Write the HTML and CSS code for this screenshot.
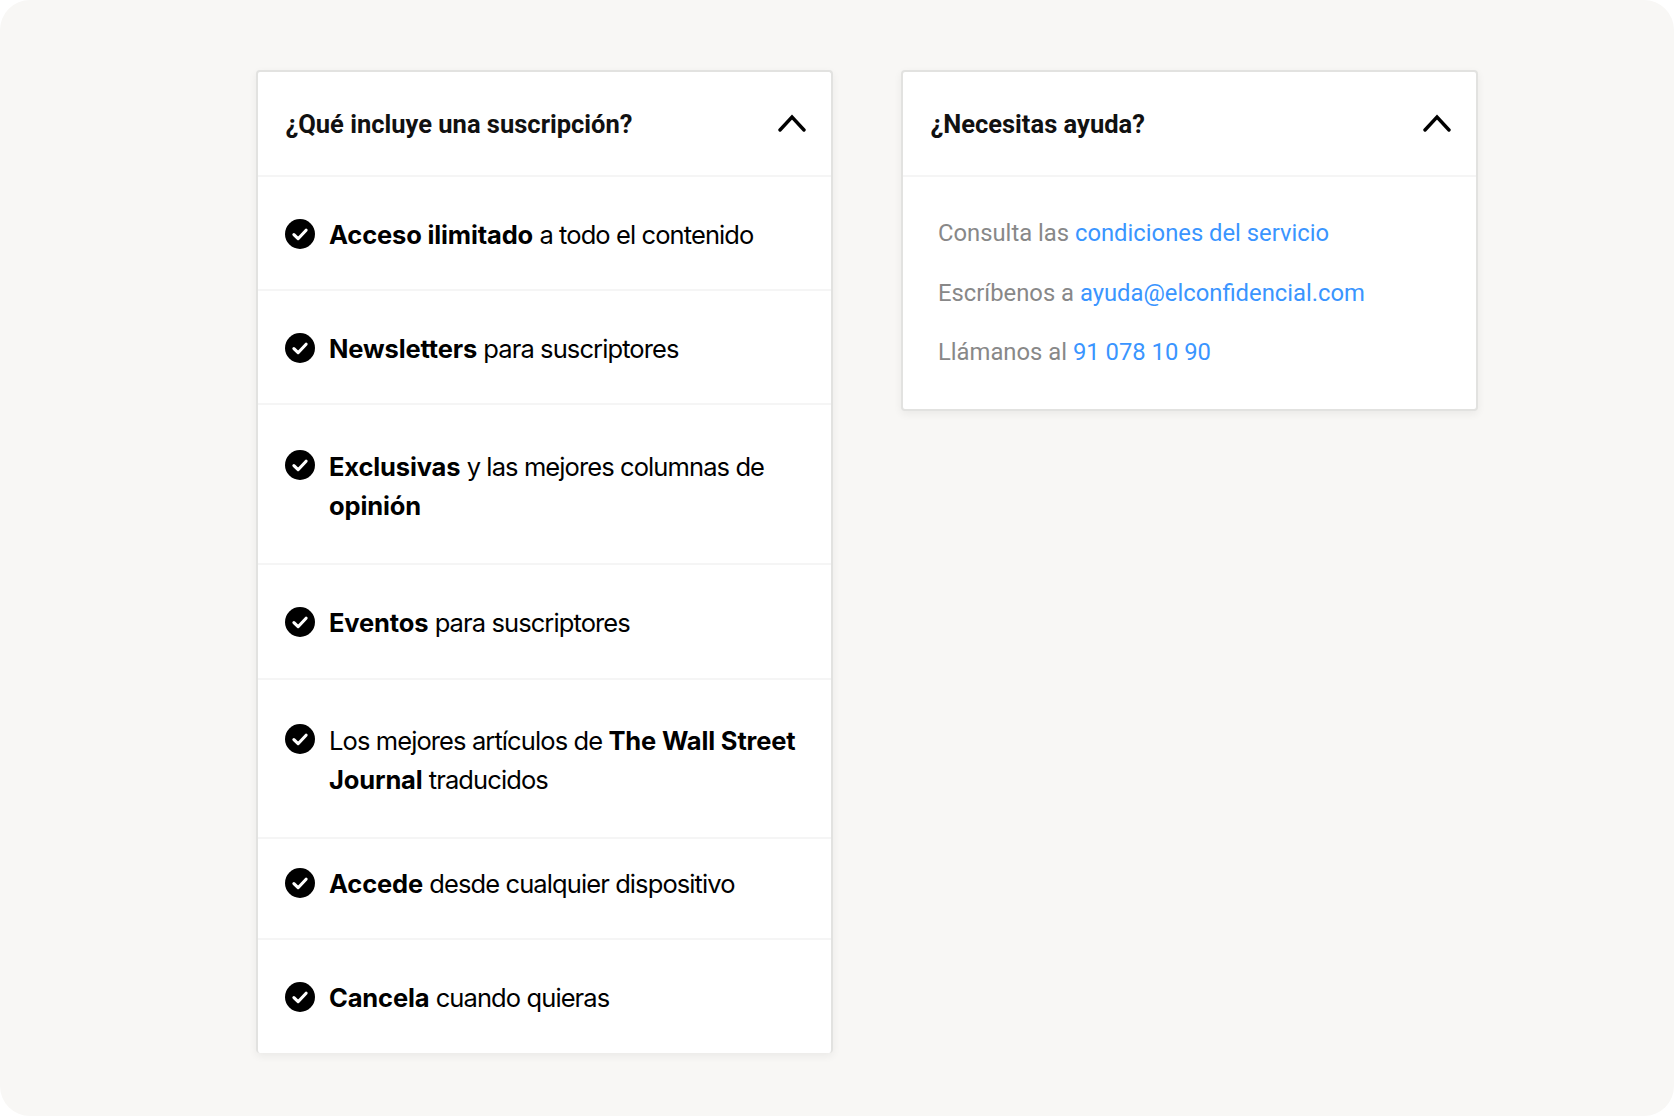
FILE: index.html
```html
<!DOCTYPE html>
<html lang="es">
<head>
<meta charset="utf-8">
<title>Suscripción</title>
<link rel="stylesheet" href="styles.css">
</head>
<body>
<svg class="sprite" width="0" height="0" aria-hidden="true">
  <symbol id="check" viewBox="0 0 30 30">
    <circle cx="15" cy="15" r="15" fill="#000"/>
    <path d="M8.9 15.6l4.2 4.1 8-8.5" fill="none" stroke="#fff" stroke-width="3.1" stroke-linecap="round" stroke-linejoin="round"/>
  </symbol>
  <symbol id="chev" viewBox="0 0 28 18">
    <path d="M2 16L14 3l12 13" fill="none" stroke="#000" stroke-width="3.4" stroke-linecap="round" stroke-linejoin="miter"/>
  </symbol>
</svg>
<main class="page">
  <section class="card card-open">
    <header class="card-head">
      <h2>¿Qué incluye una suscripción?</h2>
      <svg class="chev"><use href="#chev"/></svg>
    </header>
    <ul class="list">
      <li class="item"><svg class="tick"><use href="#check"/></svg><p><b>Acceso ilimitado</b> a todo el contenido</p></li>
      <li class="item"><svg class="tick"><use href="#check"/></svg><p><b>Newsletters</b> para suscriptores</p></li>
      <li class="item item-exclusive"><svg class="tick"><use href="#check"/></svg><p><b>Exclusivas</b> y las mejores columnas de <b>opinión</b></p></li>
      <li class="item item-events"><svg class="tick"><use href="#check"/></svg><p><b>Eventos</b> para suscriptores</p></li>
      <li class="item item-wsj"><svg class="tick"><use href="#check"/></svg><p>Los mejores artículos de <b>The Wall Street Journal</b> traducidos</p></li>
      <li class="item item-short"><svg class="tick"><use href="#check"/></svg><p><b>Accede</b> desde cualquier dispositivo</p></li>
      <li class="item"><svg class="tick"><use href="#check"/></svg><p><b>Cancela</b> cuando quieras</p></li>
    </ul>
  </section>
  <section class="card">
    <header class="card-head">
      <h2>¿Necesitas ayuda?</h2>
      <svg class="chev"><use href="#chev"/></svg>
    </header>
    <div class="help">
      <p>Consulta las <a href="#">condiciones del servicio</a></p>
      <p>Escríbenos a <a href="#">ayuda@elconfidencial.com</a></p>
      <p>Llámanos al <a href="#">91 078 10 90</a></p>
    </div>
  </section>
</main>
</body>
</html>
```
FILE: styles.css
```css
* { box-sizing: border-box; }
html, body { margin: 0; background: #fff; }
.sprite { position: absolute; }
.page {
  width: 1674px;
  height: 1116px;
  background: #f8f7f5;
  border-radius: 30px;
  display: flex;
  align-items: flex-start;
  gap: 68px;
  padding: 70px 0 0 256px;
  overflow: hidden;
}
.card {
  width: 577px;
  background: #fff;
  border: 2px solid #e2e2e0;
  border-radius: 4px;
  box-shadow: 0 3px 8px rgba(0, 0, 0, 0.06);
}
.card-open { border-bottom: 0; }
.card-head {
  height: 105px;
  padding: 0 25px 0 27.5px;
  border-bottom: 2px solid #f5f5f5;
  display: flex;
  align-items: center;
  justify-content: space-between;
}
.card-head h2 {
  margin: 0;
  font: 700 25.5px/32px Roboto, sans-serif;
  color: #111;
}
.chev { width: 28px; height: 18px; flex: none; margin-bottom: 2px; }
.list { list-style: none; margin: 0; padding: 0; }
.item {
  display: flex;
  align-items: flex-start;
  gap: 14px;
  padding: 38px 27px 35px;
  border-bottom: 2px solid #f5f5f5;
  font: 400 25.5px/39px Inter, sans-serif;
  letter-spacing: -0.9px;
  color: #000;
}
.item:last-child { border-bottom: 0; padding-bottom: 36px; }
.item p { margin: 0; }
.item b { font-weight: 700; letter-spacing: -0.15px; }
.tick { width: 30px; height: 30px; flex: none; margin-top: 4px; }
.item-exclusive { padding-top: 42px; padding-bottom: 38px; }
.item-exclusive .tick { margin-top: 3px; }
.item-events { padding-bottom: 36px; }
.item-wsj { padding-top: 41px; padding-bottom: 38px; }
.item-wsj .tick { margin-top: 3px; }
.item-short { padding-top: 24.5px; padding-bottom: 35.5px; }
.help { padding: 38px 34px 39px 35px; font: 400 23.8px/36px Roboto, sans-serif; color: #888; }
.help p { margin: 0 0 23.5px; }
.help p:last-child { margin-bottom: 0; }
.help a { color: #3a95ff; text-decoration: none; }
```
